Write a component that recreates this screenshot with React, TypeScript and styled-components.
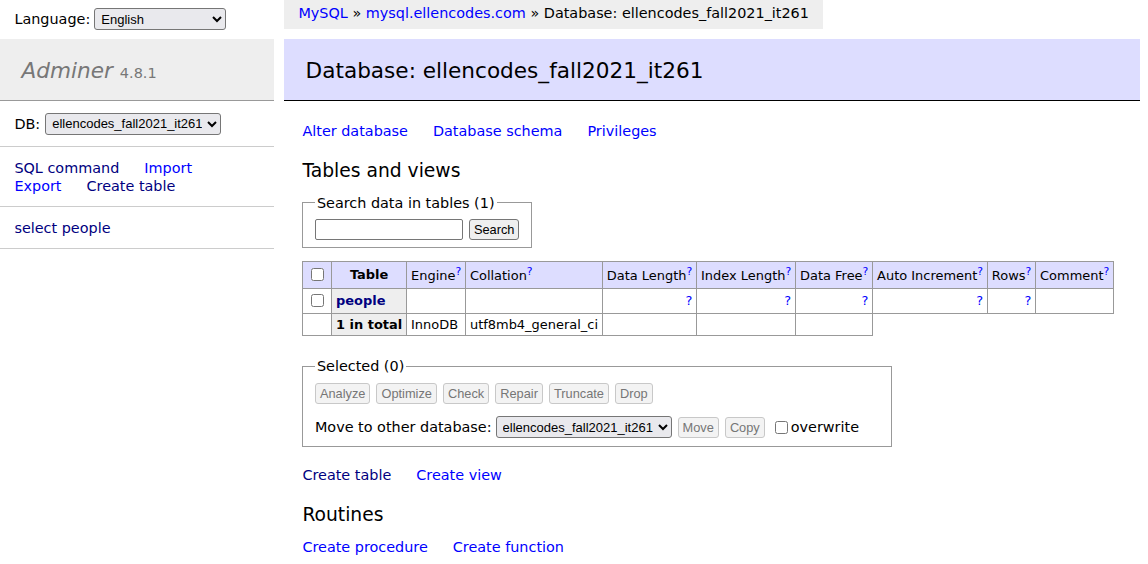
import React from 'react';
import styled, { createGlobalStyle } from 'styled-components';

const GlobalStyle = createGlobalStyle`
  body {
    margin: 0;
    color: #000;
    background: #fff;
    font: 14.4px/1.25 Verdana, "DejaVu Sans", sans-serif;
  }
`;

const Page = styled.div`
  display: grid;
  grid-template-columns: 274px 856px;
  column-gap: 10px;
  align-items: start;
`;

const Link = styled.a<{ $visited?: boolean; $bold?: boolean }>`
  color: ${p => (p.$visited ? 'navy' : 'blue')};
  font-weight: ${p => (p.$bold ? 'bold' : 'normal')};
  text-decoration: none;
  white-space: nowrap;
`;

// ---------- sidebar ----------

const Sidebar = styled.nav`
  display: flex;
  flex-direction: column;
`;

const LangBar = styled.div`
  box-sizing: border-box;
  height: 34.5px;
  margin-bottom: 4.3px;
  padding: 4.3px 14.4px 0;
  display: flex;
  align-items: center;
  gap: 4px;
`;

const Select = styled.select<{ $width: number }>`
  width: ${p => p.$width}px;
  height: 22px;
  box-sizing: border-box;
  padding: 0 2px;
  font: 13px "Liberation Sans", Arial, sans-serif;
  color: #000;
  background: #e9e9ed;
  border: 1px solid #767676;
  border-radius: 3px;
`;

const Brand = styled.h1`
  margin: 0;
  padding: 18.8px 21.6px 15.76px;
  font-size: 21.6px;
  line-height: 1.25;
  font-weight: normal;
  color: #777;
  background: #eee;
  border-bottom: 1px solid #999;
`;

const BrandName = styled.span`
  font-style: italic;
`;

const Version = styled.span`
  font-size: 67%;
`;

const MenuBlock = styled.div`
  padding: 11.52px 14.4px;
  border-bottom: 1px solid #ccc;
  line-height: 18px;
`;

const DbRow = styled(MenuBlock)`
  display: flex;
  align-items: center;
  gap: 5px;
`;

const MenuLinks = styled.div`
  display: flex;
  gap: 25px;
`;

// ---------- main ----------

const Main = styled.main`
  display: flex;
  flex-direction: column;
  align-items: flex-start;
`;

const Breadcrumb = styled.div`
  height: 28.8px;
  box-sizing: border-box;
  padding: 0.5px 14.4px 0;
  line-height: 25.9px;
  background: #eee;
  white-space: nowrap;
  margin-bottom: 10px;
`;

const Title = styled.h2`
  align-self: stretch;
  margin: 0 0 20px;
  padding: 18.8px 21.6px 15.76px;
  font-size: 21.6px;
  line-height: 1.25;
  font-weight: normal;
  color: #000;
  background: #ddf;
  border-bottom: 1px solid #000;
`;

const Content = styled.div`
  display: flex;
  flex-direction: column;
  align-items: flex-start;
  padding-left: 18.4px;
`;

const Links = styled.p<{ $top?: number }>`
  margin: ${p => p.$top ?? 11.52}px 0 0;
  display: flex;
  gap: 25px;
`;

const Heading = styled.h3`
  margin: 18.72px 0 0;
  font-size: 18.72px;
  line-height: 1.25;
  font-weight: normal;
`;

const Fieldset = styled.fieldset<{ $top: number }>`
  margin: ${p => p.$top}px 7.2px 0 0;
  padding: 7.2px 11.52px;
  border: 1px solid #999;
  min-inline-size: 0;
`;

const FooterFieldset = styled(Fieldset)`
  padding: 8px 11.52px 8px;
`;

const Legend = styled.legend`
  padding: 0 2px;
`;

const Row = styled.div`
  display: flex;
  align-items: center;
  gap: 6px;
`;

const TextInput = styled.input`
  width: 148px;
  height: 21px;
  box-sizing: border-box;
  border: 1px solid #767676;
  border-radius: 2px;
  padding: 1px 2px;
`;

const Button = styled.button<{ $disabled?: boolean }>`
  height: 21px;
  box-sizing: border-box;
  padding: 0 4px;
  font: 12.8px "Liberation Sans", Arial, sans-serif;
  color: ${p => (p.$disabled ? '#767676' : '#000')};
  background: ${p => (p.$disabled ? '#f3f3f3' : '#efefef')};
  border: 1px solid ${p => (p.$disabled ? '#c8c8c8' : '#767676')};
  border-radius: 3px;
`;

const Check = styled.input.attrs({ type: 'checkbox' })`
  width: 13px;
  height: 13px;
  margin: 3px 3px 3px 4px;
  vertical-align: middle;
`;

const Table = styled.table`
  margin-top: 12.5px;
  border-collapse: collapse;
  font-size: 12.96px;
  line-height: 1.25;
`;

const HeadRow = styled.tr`
  height: 27px;
`;

const Td = styled.td<{ $head?: boolean; $right?: boolean }>`
  border: 1px solid #999;
  padding: 2.6px 3.9px;
  white-space: nowrap;
  text-align: ${p => (p.$right ? 'right' : 'left')};
  background: ${p => (p.$head ? '#ddf' : 'transparent')};
`;

const Th = styled.th<{ $head?: boolean }>`
  border: 1px solid #999;
  padding: ${p => (p.$head ? '2.6px 6.5px' : '2.6px 3.9px')};
  white-space: nowrap;
  text-align: ${p => (p.$head ? 'center' : 'left')};
  background: ${p => (p.$head ? '#ddf' : '#eee')};
`;

const Help = () => (
  <Link href="#">
    <sup>?</sup>
  </Link>
);

const MovePara = styled.p`
  margin: 12px 20px 0 0;
  display: flex;
  align-items: center;
  gap: 6px;
`;

const MoveLabel = styled.span`
  margin-right: -2px;
`;

const CheckLabel = styled.label`
  display: flex;
  align-items: center;
`;

const columns = ['Engine', 'Collation', 'Data Length', 'Index Length', 'Data Free', 'Auto Increment', 'Rows', 'Comment'];
const actions = ['Analyze', 'Optimize', 'Check', 'Repair', 'Truncate', 'Drop'];
const db = 'ellencodes_fall2021_it261';

export default function App() {
  return (
    <>
      <GlobalStyle />
      <Page>
        <Sidebar>
          <LangBar>
            Language:
            <Select $width={132} defaultValue="en">
              <option value="en">English</option>
            </Select>
          </LangBar>
          <Brand>
            <BrandName>Adminer</BrandName> <Version>4.8.1</Version>
          </Brand>
          <DbRow>
            DB:
            <Select $width={176} defaultValue={db}>
              <option value={db}>{db}</option>
            </Select>
          </DbRow>
          <MenuBlock>
            <MenuLinks>
              <Link $visited href="#">SQL command</Link>
              <Link href="#">Import</Link>
            </MenuLinks>
            <MenuLinks>
              <Link href="#">Export</Link>
              <Link $visited href="#">Create table</Link>
            </MenuLinks>
          </MenuBlock>
          <MenuBlock>
            <Link $visited href="#">select</Link> <Link $visited href="#">people</Link>
          </MenuBlock>
        </Sidebar>

        <Main>
          <Breadcrumb>
            <Link href="#">MySQL</Link> » <Link href="#">mysql.ellencodes.com</Link> » Database: {db}
          </Breadcrumb>
          <Title>Database: {db}</Title>
          <Content>
            <Links $top={1}>
              <Link href="#">Alter database</Link>
              <Link href="#">Database schema</Link>
              <Link href="#">Privileges</Link>
            </Links>

            <Heading>Tables and views</Heading>
            <Fieldset $top={11.5}>
              <Legend>Search data in tables (1)</Legend>
              <Row>
                <TextInput type="text" />
                <Button>Search</Button>
              </Row>
            </Fieldset>

            <Table>
              <thead>
                <HeadRow>
                  <Td $head>
                    <Check />
                  </Td>
                  <Th $head>Table</Th>
                  {columns.map(c => (
                    <Td $head key={c}>
                      {c}
                      <Help />
                    </Td>
                  ))}
                </HeadRow>
              </thead>
              <tbody>
                <tr>
                  <Td>
                    <Check />
                  </Td>
                  <Th>
                    <Link $visited $bold href="#">people</Link>
                  </Th>
                  <Td />
                  <Td />
                  {['dl', 'il', 'df', 'ai', 'rows'].map(k => (
                    <Td $right key={k}>
                      <Link href="#">?</Link>
                    </Td>
                  ))}
                  <Td />
                </tr>
                <tr>
                  <Td />
                  <Th>1 in total</Th>
                  <Td>InnoDB</Td>
                  <Td>utf8mb4_general_ci</Td>
                  <Td />
                  <Td />
                  <Td />
                </tr>
              </tbody>
            </Table>

            <FooterFieldset $top={21}>
              <Legend>Selected (0)</Legend>
              <Row>
                {actions.map(a => (
                  <Button $disabled key={a}>{a}</Button>
                ))}
              </Row>
              <MovePara>
                <MoveLabel>Move to other database:</MoveLabel>
                <Select $width={176} defaultValue={db}>
                  <option value={db}>{db}</option>
                </Select>
                <Button $disabled>Move</Button>
                <Button $disabled>Copy</Button>
                <CheckLabel>
                  <Check />
                  overwrite
                </CheckLabel>
              </MovePara>
            </FooterFieldset>

            <Links $top={18.72}>
              <Link $visited href="#">Create table</Link>
              <Link href="#">Create view</Link>
            </Links>

            <Heading>Routines</Heading>
            <Links>
              <Link href="#">Create procedure</Link>
              <Link href="#">Create function</Link>
            </Links>
          </Content>
        </Main>
      </Page>
    </>
  );
}
